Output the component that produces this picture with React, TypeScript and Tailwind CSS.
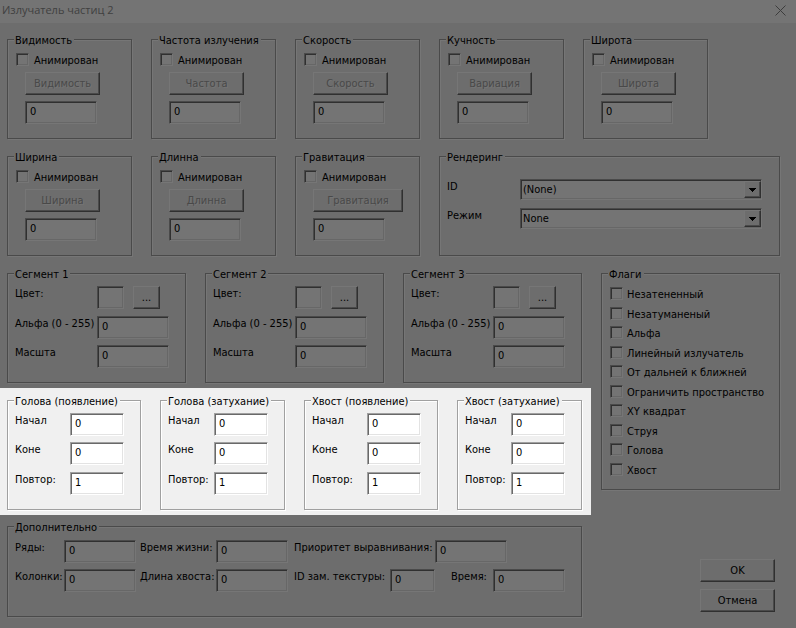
import { useState } from 'react'
import type { ReactNode } from 'react'

const SUNKEN =
  'border border-t-[var(--shade)] border-l-[var(--shade)] border-r-[var(--light)] border-b-[var(--light)] bg-[var(--field)] shadow-[inset_1px_1px_0_var(--dark),inset_-1px_-1px_0_var(--soft)]'

const RAISED =
  'border border-t-[var(--light)] border-l-[var(--light)] border-r-[var(--dark)] border-b-[var(--dark)] bg-[var(--face)] shadow-[inset_-1px_-1px_0_var(--shade)]'

const DIMMED =
  '[--face:#6d6d6d] [--field:#747474] [--light:#767676] [--soft:#676767] [--shade:#4a4a4a] [--dark:#303030]'

const LIT =
  '[--face:#f0f0f0] [--field:#ffffff] [--light:#ffffff] [--soft:#e3e3e3] [--shade:#a0a0a0] [--dark:#696969]'

const animatedTop = [
  { title: 'Видимость', button: 'Видимость' },
  { title: 'Частота излучения', button: 'Частота' },
  { title: 'Скорость', button: 'Скорость' },
  { title: 'Кучность', button: 'Вариация' },
  { title: 'Широта', button: 'Широта' },
]

const animatedBottom = [
  { title: 'Ширина', button: 'Ширина' },
  { title: 'Длинна', button: 'Длинна' },
  { title: 'Гравитация', button: 'Гравитация', wide: true },
]

const segments = ['Сегмент 1', 'Сегмент 2', 'Сегмент 3']

const flags = [
  'Незатененный',
  'Незатуманеный',
  'Альфа',
  'Линейный излучатель',
  'От дальней к ближней',
  'Ограничить пространство',
  'XY квадрат',
  'Струя',
  'Голова',
  'Хвост',
]

const intervals = [
  { title: 'Голова (появление)', className: 'grow-[134]' },
  { title: 'Голова (затухание)', className: 'grow-[125]' },
  { title: 'Хвост (появление)', className: 'grow-[134]' },
  { title: 'Хвост (затухание)', className: 'grow-[125]' },
]

function Group({ title, className = '', children }: { title: string; className?: string; children: ReactNode }) {
  return (
    <fieldset
      className={`min-w-0 border border-[var(--shade)] pt-px shadow-[1px_1px_0_var(--light),inset_1px_1px_0_var(--light)] ${className}`}
    >
      <legend className="ml-1.5 h-[13px] bg-[var(--face)] pl-px pr-0.5 whitespace-nowrap">{title}</legend>
      {children}
    </fieldset>
  )
}

function TextField({ initial = '0', className = 'w-[72px]', label }: { initial?: string; className?: string; label?: string }) {
  const [value, setValue] = useState(initial)

  return (
    <input
      type="text"
      value={value}
      aria-label={label}
      onChange={(e) => setValue(e.target.value)}
      className={`h-[23px] shrink-0 pl-1 pb-0.5 outline-none ${SUNKEN} ${className}`}
    />
  )
}

function CheckField({ label, className = '' }: { label: string; className?: string }) {
  return (
    <label className={`flex items-start whitespace-nowrap ${className}`}>
      <input
        type="checkbox"
        className={`size-[13px] shrink-0 appearance-none checked:bg-[var(--dark)] ${SUNKEN}`}
      />
      {label}
    </label>
  )
}

function AnimatedGroup({ title, button, wide }: { title: string; button: string; wide?: boolean }) {
  return (
    <Group title={title} className="w-[125px]">
      <div className="flex flex-col items-start gap-1.5 px-2 pt-1.5 pb-3.5">
        <CheckField label="Анимирован" className="h-[13px] gap-[5px]" />
        <button
          type="button"
          disabled
          className={`ml-[9px] h-[23px] text-[#494949] [text-shadow:1px_1px_0_#757575] ${wide ? 'w-[90px]' : 'w-[75px]'} ${RAISED}`}
        >
          {button}
        </button>
        <TextField label={title} className="ml-[9px] w-[72px]" />
      </div>
    </Group>
  )
}

function SelectField({ label, option }: { label: string; option: string }) {
  return (
    <label className="flex items-start">
      <span className="w-[73px] shrink-0">{label}</span>
      <span className="relative flex-1">
        <select className={`block h-[21px] w-full appearance-none pl-0.5 outline-none ${SUNKEN}`}>
          <option>{option}</option>
        </select>
        <span
          className={`pointer-events-none absolute top-0.5 right-px flex size-[17px] items-center justify-center ${RAISED}`}
        >
          <svg width="7" height="4" viewBox="0 0 7 4" shapeRendering="crispEdges">
            <path d="M0 0h7v1h-1v1h-1v1h-1v1h-1v-1h-1v-1h-1v-1h-1z" fill="#000" />
          </svg>
        </span>
      </span>
    </label>
  )
}

function SegmentGroup({ title }: { title: string }) {
  return (
    <Group title={title} className="flex-1">
      <div className="flex flex-col gap-1.5 pt-[5px] pr-4 pb-3.5 pl-[7px]">
        <div className="flex h-6 items-start justify-between">
          <span>Цвет:</span>
          <div className="flex w-[72px] gap-[9px]">
            <span className={`h-[23px] w-[27px] ${SUNKEN}`} />
            <button type="button" className={`h-[23px] w-[27px] ${RAISED}`}>
              ...
            </button>
          </div>
        </div>
        <label className="flex items-start justify-between whitespace-nowrap">
          Альфа (0 - 255)
          <TextField />
        </label>
        <label className="flex items-start justify-between">
          Масшта
          <TextField />
        </label>
      </div>
    </Group>
  )
}

function IntervalGroup({ title, className }: { title: string; className: string }) {
  return (
    <Group title={title} className={`basis-0 ${className}`}>
      <div className="flex flex-col gap-1.5 pt-[5px] pr-4 pb-3.5 pl-[7px]">
        <label className="flex items-start justify-between">
          Начал
          <TextField className="w-[54px]" />
        </label>
        <label className="flex h-6 items-start justify-between">
          Коне
          <TextField className="w-[54px]" />
        </label>
        <label className="flex items-start justify-between">
          Повтор:
          <TextField initial="1" className="w-[54px]" />
        </label>
      </div>
    </Group>
  )
}

function InlineField({ label, labelClass, fieldClass }: { label: string; labelClass: string; fieldClass?: string }) {
  return (
    <label className="flex items-start whitespace-nowrap">
      <span className={labelClass}>{label}</span>
      <TextField className={fieldClass} />
    </label>
  )
}

export default function App() {
  return (
    <div
      className={`min-h-screen bg-[var(--face)] font-['Tahoma','DejaVu_Sans_Condensed','DejaVu_Sans',sans-serif] text-[11px] leading-4 text-black ${DIMMED}`}
    >
      <header className="flex h-[23px] items-start justify-between bg-[#747474] pl-0.5 pr-2.5">
        <h1 className="font-['Segoe_UI','Open_Sans',sans-serif] text-[11px] leading-5 text-[#404040]">
          Излучатель частиц 2
        </h1>
        <button type="button" aria-label="Закрыть" className="pt-[5px] text-[#3c3c3c]">
          <svg width="11" height="11" viewBox="0 0 11 11" stroke="currentColor" strokeWidth="1">
            <path d="M0.5 0.5l10 10M10.5 0.5l-10 10" />
          </svg>
        </button>
      </header>

      <main className="pt-2.5 pb-[11px]">
        <div className="flex gap-[19px] pl-[7px]">
          {animatedTop.map((item) => (
            <AnimatedGroup key={item.title} {...item} />
          ))}
        </div>

        <div className="mt-[11px] flex gap-[19px] pr-4 pl-[7px]">
          {animatedBottom.map((item) => (
            <AnimatedGroup key={item.title} {...item} />
          ))}
          <Group title="Рендеринг" className="flex-1">
            <div className="flex flex-col gap-2 pt-[15px] pr-[17px] pl-[7px]">
              <SelectField label="ID" option="(None)" />
              <SelectField label="Режим" option="None" />
            </div>
          </Group>
        </div>

        <div className="mt-[11px] flex gap-2.5 pr-4">
          <div className="flex-1">
            <div className="flex gap-[19px] pr-[9px] pl-[7px]">
              {segments.map((title) => (
                <SegmentGroup key={title} title={title} />
              ))}
            </div>

            <section className={`mt-[5px] flex gap-[19px] bg-[var(--face)] pt-1.5 pr-[9px] pb-[5px] pl-[7px] ${LIT}`}>
              {intervals.map((item) => (
                <IntervalGroup key={item.title} {...item} />
              ))}
            </section>

            <div className="mt-[5px] pr-[9px] pl-[7px]">
              <Group title="Дополнительно">
                <div className="flex flex-col gap-1.5 pt-1.5 pb-6 pl-[7px]">
                  <div className="flex">
                    <InlineField label="Ряды:" labelClass="w-[49px]" />
                    <InlineField label="Время жизни:" labelClass="w-20 pl-1" />
                    <InlineField label="Приоритет выравнивания:" labelClass="w-[147px] pl-1.5" />
                  </div>
                  <div className="flex">
                    <InlineField label="Колонки:" labelClass="w-[49px]" />
                    <InlineField label="Длина хвоста:" labelClass="w-20 pl-1" />
                    <InlineField label="ID зам. текстуры:" labelClass="w-[102px] pl-1.5" fieldClass="w-[45px]" />
                    <InlineField label="Время:" labelClass="w-[58px] pl-4" />
                  </div>
                </div>
              </Group>
            </div>
          </div>

          <div className="flex w-[179px] flex-col justify-between">
            <Group title="Флаги">
              <div className="px-2 pt-1.5 pb-[7px]">
                {flags.map((flag) => (
                  <CheckField key={flag} label={flag} className="gap-1 odd:h-5 even:h-[19px]" />
                ))}
              </div>
            </Group>
            <div className="flex flex-col items-end gap-[7px] pr-[5px] pb-[5px]">
              <button type="button" className={`h-[23px] w-[75px] ${RAISED}`}>
                OK
              </button>
              <button type="button" className={`h-[23px] w-[75px] ${RAISED}`}>
                Отмена
              </button>
            </div>
          </div>
        </div>
      </main>
    </div>
  )
}
